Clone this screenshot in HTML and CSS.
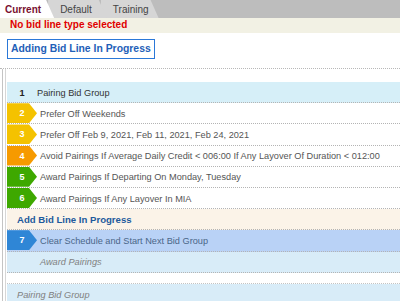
FILE: index.html
```html
<!DOCTYPE html>
<html>
  <head>
    <meta charset="utf-8">
    <title>Bid Lines</title>
    <link rel="stylesheet" href="styles.css">
  </head>
  <body>
    <div class="tabs">
      <div class="tab current">Current</div>
      <div class="tab">Default</div>
      <div class="tab">Training</div>
    </div>
    <div class="status">No bid line type selected</div>
    <div class="toolbar">
      <button class="progress">Adding Bid Line In Progress</button>
    </div>
    <div class="list">
      <div class="row group"><span class="num">1</span><span class="label">Pairing Bid Group</span></div>
      <div class="row"><span class="badge yellow">2</span><span class="label">Prefer Off Weekends</span></div>
      <div class="row"><span class="badge yellow">3</span><span class="label">Prefer Off Feb 9, 2021, Feb 11, 2021, Feb 24, 2021</span></div>
      <div class="row"><span class="badge orange">4</span><span class="label">Avoid Pairings If Average Daily Credit &lt; 006:00 If Any Layover Of Duration &lt; 012:00</span></div>
      <div class="row"><span class="badge green">5</span><span class="label">Award Pairings If Departing On Monday, Tuesday</span></div>
      <div class="row"><span class="badge green">6</span><span class="label">Award Pairings If Any Layover In MIA</span></div>
      <div class="row adding"><span class="label">Add Bid Line In Progress</span></div>
      <div class="row next"><span class="badge blue">7</span><span class="label">Clear Schedule and Start Next Bid Group</span></div>
      <div class="row ghost"><span class="label">Award Pairings</span></div>
      <div class="spacer"></div>
      <div class="row ghost-group"><span class="label">Pairing Bid Group</span></div>
    </div>
  </body>
</html>
```

FILE: styles.css
```css
* {
  box-sizing: border-box;
}
body {
  margin: 0;
  background: #fff;
  font-family: "Liberation Sans", Arial, sans-serif;
  overflow: hidden;
}

/* tabs */
.tabs {
  display: flex;
  height: 18px;
  background: #bdbdbd;
}
.tab {
  position: relative;
  height: 18px;
  line-height: 19px;
  font-size: 10px;
  color: #444;
  padding: 0 16px 0 8px;
  margin-right: -6px;
  background: #d6d6d6;
  clip-path: polygon(0 0, calc(100% - 8px) 0, 100% 100%, 0 100%);
}
.tab.current {
  z-index: 2;
  background: #fff;
  color: #7a1030;
  font-weight: bold;
  padding-left: 5px;
  padding-right: 13px;
}
.tab:nth-child(2) {
  z-index: 1;
  padding-left: 12px;
  padding-right: 15px;
}
.tab:nth-child(3) {
  padding-left: 12px;
  padding-right: 10px;
}

.status {
  height: 15px;
  line-height: 14px;
  padding-left: 10px;
  background: #f2f1e4;
  color: #e00000;
  font-size: 10px;
  font-weight: bold;
}

.toolbar {
  padding: 5px 7px 0;
  height: 36px;
  border-bottom: 1px dotted #b8b8b8;
}
.progress {
  height: 20px;
  padding: 0 3px;
  background: #fff;
  border: 1px solid #2a78d8;
  color: #1f5fb8;
  font-family: inherit;
  font-size: 10.4px;
  font-weight: bold;
}

/* list */
.list {
  padding: 13px 0 0 7px;
  background-image: linear-gradient(90deg, transparent 2px, #c4c4c4 2px, #c4c4c4 3px, transparent 3px, transparent 5px, #d6d6d6 5px, #d6d6d6 6px, transparent 6px);
  background-size: 7px 2px;
  background-repeat: repeat-y;
}
.row {
  display: flex;
  align-items: center;
  height: 21.2px;
  padding-top: 1px;
  border-bottom: 1px dotted #b4b4b4;
  font-size: 9.2px;
  color: #555;
  background: #fff;
  white-space: nowrap;
}
.row .label {
  padding-left: 3px;
}
.badge {
  width: 30px;
  height: 20px;
  flex: none;
  align-self: flex-start;
  margin-top: -1px;
  color: #fff;
  font-weight: bold;
  font-size: 9px;
  line-height: 21px;
  text-align: center;
  clip-path: polygon(0 0, 22px 0, 30px 50%, 22px 100%, 0 100%);
}
.yellow { background: #f4c200; }
.orange { background: #f69a00; }
.green { background: #3ea800; }
.blue { background: #2f86d6; }

.row.group {
  background: #d6eff8;
  color: #333;
}
.group .num {
  width: 30px;
  text-align: center;
  font-weight: bold;
  color: #222;
}
.group .label {
  padding-left: 0;
}

.row.adding {
  background: #fbf3e8;
  font-size: 9.6px;
  font-weight: bold;
  color: #1d5a9c;
}
.adding .label {
  padding-left: 10px;
}

.row.next {
  background: #b9d2f6;
  color: #4a6688;
}

.row.ghost {
  background: #d8ecf8;
  color: #808080;
  font-style: italic;
}
.ghost .label {
  padding-left: 33px;
}

.spacer {
  height: 11px;
  border-bottom: 1px dotted #c4c4c4;
}

.row.ghost-group {
  background: #d8ecf8;
  color: #808080;
  font-style: italic;
  border-bottom: none;
}
.ghost-group .label {
  padding-left: 10px;
}
```
